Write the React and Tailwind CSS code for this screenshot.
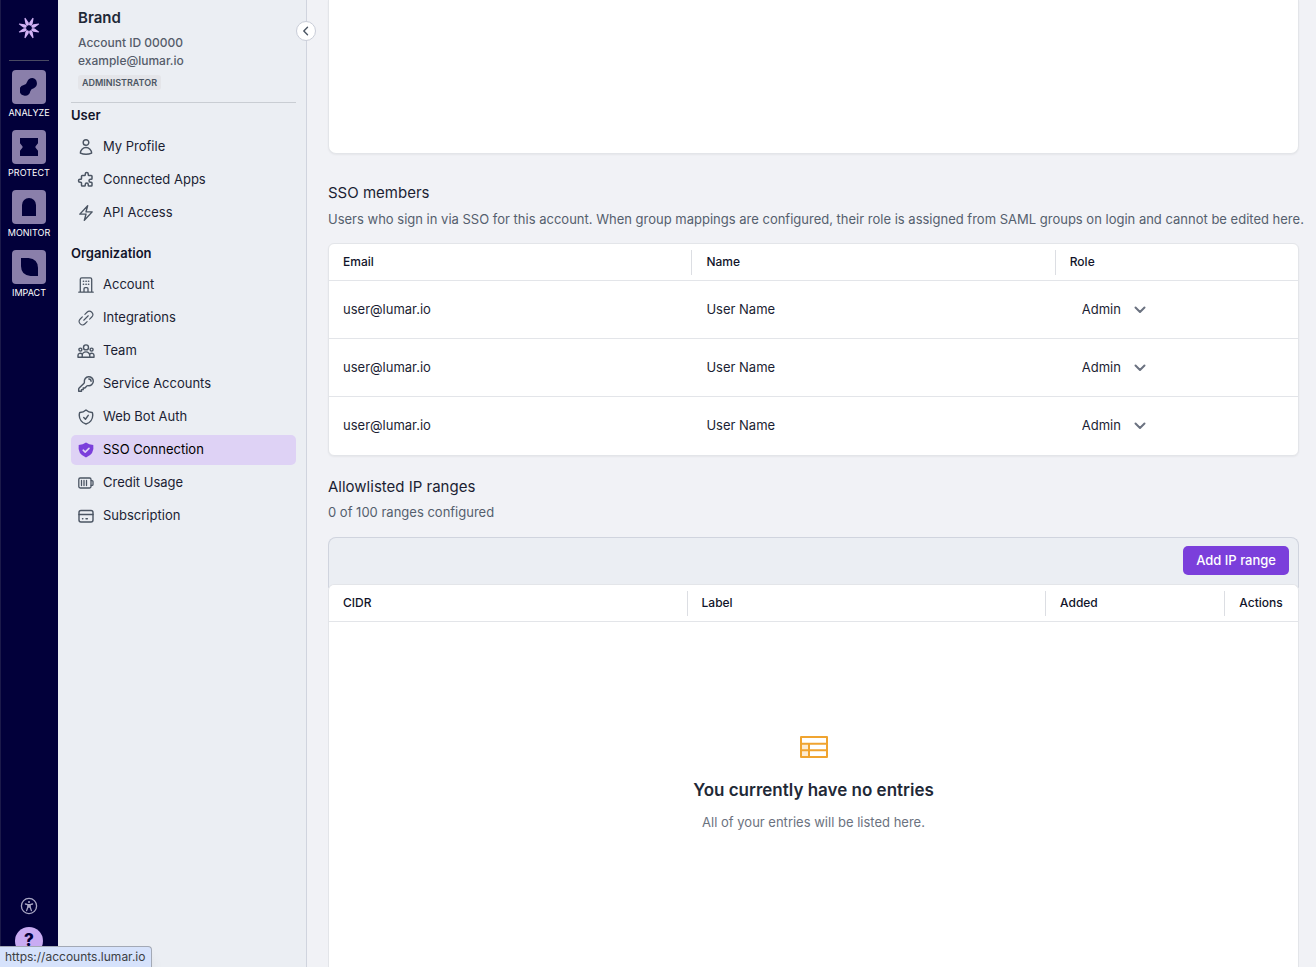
import React, { useState } from 'react';
import {
  HiOutlineUser,
  HiOutlineBolt,
  HiOutlineKey,
  HiOutlineShieldCheck
} from 'react-icons/hi2';
import { HiOutlinePuzzle } from 'react-icons/hi';
import { PiLinkSimple } from 'react-icons/pi';

const BuildingIcon = (props) => (
  <svg viewBox="0 0 18 18" fill="none" stroke="currentColor" strokeLinecap="round" strokeLinejoin="round" {...props}>
    <path d="M1.8 16.2h14.4M3.3 16V3.2q0-1.4 1.4-1.4h8.6q1.4 0 1.4 1.4V16M7 16v-3.3q0-1.1 1.1-1.1h1.8q1.1 0 1.1 1.1V16" strokeWidth="1.3" />
    <path d="M6.4 5.2h.2M9 5.2h.2M11.5 5.2h.2M6.4 8.3h.2M9 8.3h.2M11.5 8.3h.2" strokeWidth="1.6" />
  </svg>
);

const TeamIcon = (props) => (
  <svg viewBox="0 0 18 18" fill="none" stroke="currentColor" strokeWidth="1.4" strokeLinecap="round" strokeLinejoin="round" {...props}>
    <circle cx="9" cy="5.4" r="2.5" />
    <circle cx="3.4" cy="7.6" r="1.5" />
    <circle cx="14.6" cy="7.6" r="1.5" />
    <path d="M5.2 15.3v-1.6a3.8 3.8 0 0 1 7.6 0v1.6zM5.2 15.3H1v-1.7a2.3 2.3 0 0 1 4-1.6M12.8 15.3H17v-1.7a2.3 2.3 0 0 0-4-1.6" />
  </svg>
);

const ShieldIcon = (props) => (
  <svg viewBox="0 0 18 18" {...props}>
    <path d="M9 1.6Q12 4 16.3 4.1q1.400 9-7.300 12.500Q.3 13.100 1.700 4.100 6 4 9 1.600z" fill="currentColor" />
    <path d="M6.200 9.200l2 1.900 3.800-3.700" fill="none" stroke="#ded2f5" strokeWidth="1.6" strokeLinecap="round" strokeLinejoin="round" />
  </svg>
);

const BatteryIcon = (props) => (
  <svg viewBox="0 0 18 18" fill="none" stroke="currentColor" strokeWidth="1.3" strokeLinecap="round" strokeLinejoin="round" {...props}>
    <rect x="1.8" y="4" width="12.2" height="10" rx="1.4" />
    <path d="M4.5 6.5v5M7 6.5v5M9.5 6.5v5M14.2 6.6h.8q1 0 1 1v2.8q0 1-1 1h-.8" />
  </svg>
);

const CardIcon = (props) => (
  <svg viewBox="0 0 18 18" fill="none" stroke="currentColor" strokeWidth="1.4" strokeLinecap="round" strokeLinejoin="round" {...props}>
    <rect x="2" y="3.5" width="14" height="11.5" rx="2" />
    <path d="M2 7.5h14M5.5 11.7h.4M9 11.700h1.4" />
  </svg>
);

const Logo = () => (
  <svg viewBox="-10 -10 20 20" className="h-5 w-5 overflow-visible" fill="#d2b2f5">
    {[22.5, 67.5, 112.5, 157.5, 202.5, 247.5, 292.5, 337.5].map(a => (
      <path key={a} d="M-.5 -10.8H.5L1.700 -5.500L1.500 -3.400L0 -2.500L-1.500 -3.400L-1.700 -5.500Z" transform={`rotate(${a})`} />
    ))}
  </svg>
);

const modules = [
  { label: 'ANALYZE', shape: <path d="M12.5 0a5.4 5.4 0 0 1 1.3 10.2q-2.8.4-3.5 3A5.4 5.4 0 1 1 3.8 7q2.8-.4 3.5-3.4A5.4 5.4 0 0 1 12.5 0z" /> },
  { label: 'PROTECT', shape: <path d="M0 0h18v5.2l-2.4 3q-.5.8 0 1.6l2.4 3V18H0v-5.2l2.4-3q.5-.8 0-1.6L0 5.2z" /> },
  { label: 'MONITOR', shape: <path d="M2 18V7a7 7 0 0 1 14 0v11z" /> },
  { label: 'IMPACT', shape: <path d="M1 0h7.5Q18 1 18 10v8h-7.5Q1 17 1 8z" /> }
];

const userLinks = [
  { label: 'My Profile', icon: HiOutlineUser },
  { label: 'Connected Apps', icon: HiOutlinePuzzle },
  { label: 'API Access', icon: HiOutlineBolt }
];

const orgLinks = [
  { label: 'Account', icon: BuildingIcon },
  { label: 'Integrations', icon: PiLinkSimple },
  { label: 'Team', icon: TeamIcon },
  { label: 'Service Accounts', icon: HiOutlineKey },
  { label: 'Web Bot Auth', icon: HiOutlineShieldCheck },
  { label: 'SSO Connection', icon: ShieldIcon, active: true },
  { label: 'Credit Usage', icon: BatteryIcon },
  { label: 'Subscription', icon: CardIcon }
];

// icons that come with a thin outline get a heavier one
const heavy = [HiOutlineUser, HiOutlineBolt, HiOutlineKey, HiOutlineShieldCheck];

const Rail = () => (
  <nav className="flex w-[58px] shrink-0 flex-col items-center border-l border-[#1c1a4a] bg-[#02003a] pt-[18px] pr-px">
    <a href="#home" aria-label="Home"><Logo /></a>
    <div className="mt-[22px] h-px w-10 bg-[#4a4a62]" />
    <div className="mt-[9px] flex flex-col gap-[11px]">
      {modules.map(m => (
        <a key={m.label} href="#module" className="flex flex-col items-center gap-[2px]">
          <span className="flex h-[34px] w-[34px] items-center justify-center rounded bg-[#8a7faa]">
            <svg viewBox="0 0 18 18" className="h-[18px] w-[18px]" fill="#02003a">{m.shape}</svg>
          </span>
          <span className="text-[9px] leading-[13px] text-white">{m.label}</span>
        </a>
      ))}
    </div>
    <button type="button" aria-label="Accessibility" className="mt-auto text-[#a9a6c4]">
      <svg viewBox="0 0 18 18" className="h-[18px] w-[18px]" fill="none" stroke="currentColor" strokeWidth="1.3" strokeLinecap="round" strokeLinejoin="round">
        <circle cx="9" cy="9" r="7.6" />
        <circle cx="9" cy="4.9" r="1" fill="currentColor" stroke="none" />
        <path d="M5.4 7l2.4.6h2.4l2.4-.6M7.8 7.6v2.6l-1.2 3.4M10.2 7.6v2.6l1.2 3.4M7.8 10.2h2.4M9 7.6v2.6" />
      </svg>
    </button>
    <button type="button" className="mt-3 mb-3 h-7 w-7 shrink-0 rounded-full bg-[#c9abf2] text-[17px] font-extrabold text-[#02003a]">?</button>
  </nav>
);

const NavGroup = ({ title, links }) => (
  <section>
    <h3 className="text-[13px] leading-5 font-semibold text-[#11142a]">{title}</h3>
    <ul className="mt-[7px] flex flex-col gap-[3px]">
      {links.map(({ label, icon: Icon, active }) => (
        <li key={label}>
          <a href="#settings" className={`flex h-[30px] items-center gap-2 rounded-[5px] pl-[6px] text-[13px] ${active ? 'bg-[#ded2f5] text-black' : 'text-[#1b1e33]'}`}>
            <Icon className={`h-[18px] w-[18px] shrink-0 ${active ? 'text-[#7b3fdb]' : 'text-[#4b5563]'} ${heavy.includes(Icon) ? 'stroke-[1.9]' : ''}`} />
            {label}
          </a>
        </li>
      ))}
    </ul>
  </section>
);

const Sidebar = () => (
  <aside className="relative w-[249px] shrink-0 border-r border-[#d0d4de] bg-[#ebeef3] pr-[10px] pl-[13px]">
    <div className="border-b border-[#c9cdd3] px-[7px] pt-2 pb-3">
      <h2 className="text-[15px] leading-5 font-semibold text-[#1f2937]">Brand</h2>
      <p className="mt-[6px] text-[12px] leading-[18px] font-medium text-[#555c6a]">Account ID 00000</p>
      <p className="text-[12px] leading-[18px] font-medium text-[#555c6a]">example@lumar.io</p>
      <span className="mt-[5px] block w-fit rounded-[3px] bg-[#e4e5e9] px-1 text-[9px] leading-[15px] font-semibold text-[#4b5563]">ADMINISTRATOR</span>
    </div>
    <div className="flex flex-col gap-[15px] pt-[2px]">
      <NavGroup title="User" links={userLinks} />
      <NavGroup title="Organization" links={orgLinks} />
    </div>
    <button type="button" aria-label="Collapse menu" className="absolute top-[21px] -right-[10px] flex h-5 w-5 items-center justify-center rounded-full border border-[#c9cdd8] bg-white text-[#4b5563]">
      <svg viewBox="0 0 10 10" className="h-[10px] w-[10px]" fill="none" stroke="currentColor" strokeWidth="1.4" strokeLinecap="round" strokeLinejoin="round"><path d="M6.5 1.2L2.8 5l3.7 3.8" /></svg>
    </button>
  </aside>
);

const HeadCell = ({ children, last }) => (
  <th scope="col" className="h-[37px] border-b border-[#e3e5e9] p-0 text-left text-[12px] font-medium text-[#11142a]">
    <div className={`flex h-[25px] items-center pl-[14px] ${last ? '' : 'border-r border-[#dcdee3]'}`}>{children}</div>
  </th>
);

const RoleSelect = ({ email }) => {
  const [role, setRole] = useState('Admin');
  return (
    <div className="grid w-[84px] items-center">
      <select
        aria-label={`Role of ${email}`}
        value={role}
        onChange={e => setRole(e.target.value)}
        className="col-start-1 row-start-1 h-8 appearance-none bg-transparent pl-3 text-[13px] text-[#1b1e33] outline-none">
        <option>Admin</option>
        <option>Editor</option>
        <option>Viewer</option>
      </select>
      <svg viewBox="0 0 12 8" className="pointer-events-none col-start-1 row-start-1 mr-2 h-2 w-3 justify-self-end text-[#6b7280]" fill="none" stroke="currentColor" strokeWidth="2" strokeLinecap="round" strokeLinejoin="round"><path d="M1.5 1.5L6 6l4.5-4.5" /></svg>
    </div>
  );
};

const members = [1, 2, 3].map(id => ({ id, email: 'user@lumar.io', name: 'User Name' }));

const MembersTable = () => (
  <div className="mt-[14px] shrink-0 overflow-hidden rounded-md border border-[#e3e5e9] bg-white shadow-xs">
    <table className="w-full table-fixed border-separate border-spacing-0">
      <colgroup>
        <col className="w-[37.5%]" />
        <col className="w-[37.5%]" />
        <col className="w-[25%]" />
      </colgroup>
      <thead>
        <tr>
          <HeadCell>Email</HeadCell>
          <HeadCell>Name</HeadCell>
          <HeadCell last>Role</HeadCell>
        </tr>
      </thead>
      <tbody className="text-[13px] text-[#1b1e33] [&_tr:not(:last-child)>td]:border-b [&_td]:border-[#e3e5e9]">
        {members.map(m => (
          <tr key={m.id}>
            <td className="h-[58px] py-0 pl-[14px]">{m.email}</td>
            <td className="py-0 pl-[14px]">{m.name}</td>
            <td className="py-0 pl-[14px]"><RoleSelect email={m.email} /></td>
          </tr>
        ))}
      </tbody>
    </table>
  </div>
);

const RangesTable = () => (
  <div className="mt-[15px] flex grow flex-col">
    <div className="flex justify-end rounded-t-lg border border-b-0 border-[#d0d4de] bg-[#ebeef3] px-[9px] pt-2 pb-[13px]">
      <button type="button" className="h-[29px] rounded-[5px] bg-[#7b3fdb] px-[13px] text-[13px] font-medium text-white">Add IP range</button>
    </div>
    <div className="-mt-1 flex grow flex-col rounded-t-md border border-b-0 border-[#e3e5e9] bg-white">
      <table className="w-full table-fixed border-separate border-spacing-0">
        <colgroup>
          <col className="w-[37%]" />
          <col className="w-[37%]" />
          <col className="w-[18.5%]" />
          <col className="w-[7.5%]" />
        </colgroup>
        <thead>
          <tr>
            <HeadCell>CIDR</HeadCell>
            <HeadCell>Label</HeadCell>
            <HeadCell>Added</HeadCell>
            <HeadCell last>Actions</HeadCell>
          </tr>
        </thead>
      </table>
      <div className="flex flex-col items-center pt-[114px]">
        <svg viewBox="0 0 28 22" className="h-[22px] w-7" fill="none" stroke="#f0a430" strokeWidth="2" strokeLinejoin="round">
          <path d="M1 8h8v13H1z" fill="#fdebd0" stroke="none" />
          <path d="M1 1h26v20H1zM1 7.7h26M1 14.3h26M9 7.7V21" />
        </svg>
        <h3 className="mt-5 text-[17px] leading-6 font-semibold text-[#1f2937]">You currently have no entries</h3>
        <p className="mt-[10px] text-[13px] leading-5 text-[#6b7280]">All of your entries will be listed here.</p>
      </div>
    </div>
  </div>
);

const App = () => (
  <div className="relative flex h-screen overflow-hidden bg-[#f1f2f6] font-['Inter',sans-serif]">
    <Rail />
    <Sidebar />
    <main className="flex min-w-0 grow flex-col pr-[17px] pl-[21px]">
      <div className="h-[154px] shrink-0 rounded-b-lg border border-t-0 border-[#e3e5e9] bg-white shadow-xs" />
      <h2 className="mt-[27px] text-[15px] leading-6 text-[#1b1e33]">SSO members</h2>
      <p className="mt-1 text-[13px] leading-5 whitespace-nowrap text-[#555f6e]">Users who sign in via SSO for this account. When group mappings are configured, their role is assigned from SAML groups on login and cannot be edited here.</p>
      <MembersTable />
      <h2 className="mt-[19px] text-[15px] leading-6 text-[#1b1e33]">Allowlisted IP ranges</h2>
      <p className="mt-[3px] text-[13px] leading-5 text-[#555f6e]">0 of 100 ranges configured</p>
      <RangesTable />
    </main>
    <div className="absolute bottom-0 left-0 rounded-tr border-t border-r border-[#a3a9b5] bg-[#d6e2fb] pr-[6px] pl-[5px] text-[12px] leading-5 text-[#3c4043] shadow-lg">https://accounts.lumar.io</div>
  </div>
);

export default App;
